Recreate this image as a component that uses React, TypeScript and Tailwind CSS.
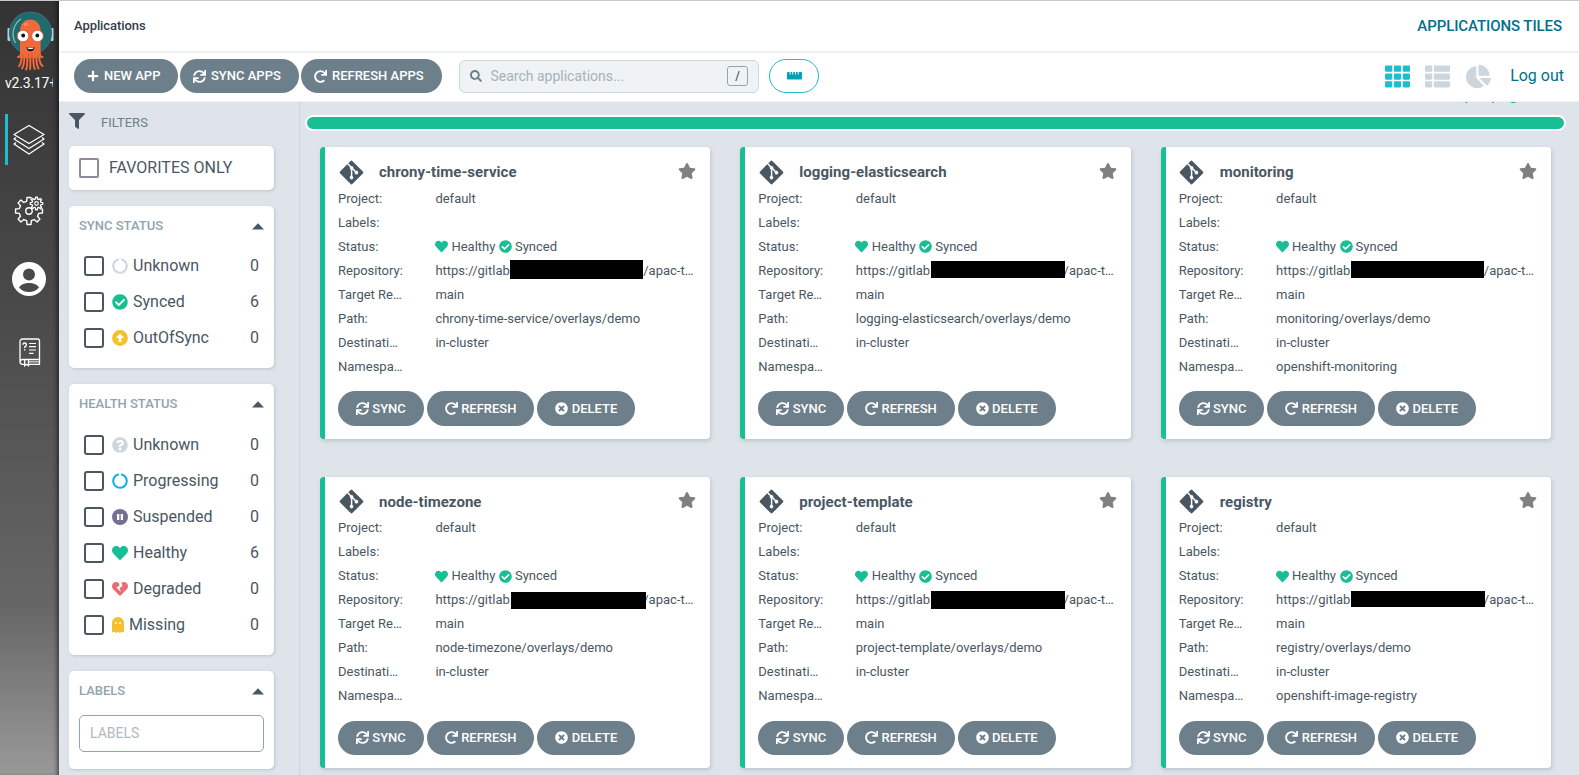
import React from "react";
import {
  FaPlus, FaSync, FaRedo, FaSearch, FaTh, FaThList, FaChartPie, FaFilter, FaStar, FaGitAlt,
  FaCircleNotch, FaCheckCircle, FaQuestionCircle, FaHeart, FaHeartBroken, FaTimesCircle,
} from "react-icons/fa";

type App = { name: string; ns: string; redact: string };

const apps: App[] = [
  { name: "chrony-time-service", ns: "", redact: "left-[74.500px] w-[133px] top-[1px] h-[19px]" },
  { name: "logging-elasticsearch", ns: "", redact: "left-[75px] w-[134px] top-[2px] h-[17px]" },
  { name: "monitoring", ns: "openshift-monitoring", redact: "left-[74.500px] w-[133px] top-[2px] h-[17px]" },
  { name: "node-timezone", ns: "", redact: "left-[75.500px] w-[135px] top-[4px] h-[17px]" },
  { name: "project-template", ns: "", redact: "left-[75px] w-[134px] top-[3px] h-[18px]" },
  { name: "registry", ns: "openshift-image-registry", redact: "left-[74.500px] w-[134px] top-[3px] h-[16px]" },
];

function Octopus() {
  return (
    <svg width="48" height="62" viewBox="0 0 48 62" className="block">
      <rect x="0.5" y="17" width="3" height="13" rx="1" fill="#b5cfe6" />
      <rect x="43.5" y="17" width="3" height="13" rx="1" fill="#b5cfe6" />
      <circle cx="23.500" cy="22" r="21.600" fill="#3d6b80" />
      <circle cx="23.500" cy="22" r="20.600" fill="#1f6a6b" />
      <path d="M8.500 32A18 18 0 0 1 14 8" fill="none" stroke="#8fb9b5" strokeWidth="1.300" />
      <path d="M13 20c0-7 4.500-11.500 10.300-11.500S33.600 13 33.600 20v27H13z" fill="#f0693c" />
      <g fill="none" stroke="#f0693c" strokeWidth="2" strokeLinecap="round">
        <path d="M14 42c0 2.500-1 4-3 4" />
        <path d="M32.600 42c0 2.500 1 4 3 4" />
        <path d="M14.500 46c0 4-.5 7-2.500 9" />
        <path d="M17.300 46c0 5-.5 9-2.300 11.500" />
        <path d="M20.300 46c0 6 .2 10-1.300 12.500" />
        <path d="M23.300 46c0 5 .2 9-.3 12" />
        <path d="M26.300 46c0 6 .2 9 1.400 12" />
        <path d="M29.300 46c0 5 .6 8.500 2.200 11.500" />
        <path d="M32.300 46c0 4 1 7 3.200 9" />
      </g>
      <path d="M15.800 44v6M21.700 43v7m3.300-7v7m6-6v6" stroke="#c94f2d" strokeWidth=".7" fill="none" />
      <ellipse cx="19" cy="13.500" rx="2.500" ry="1.800" fill="#f58a66" />
      <circle cx="16" cy="25" r="5.800" fill="#fff" stroke="#d8532d" strokeWidth=".8" />
      <circle cx="30.500" cy="25" r="5.800" fill="#fff" stroke="#d8532d" strokeWidth=".8" />
      <circle cx="16.200" cy="24.500" r="1.900" fill="#111" />
      <circle cx="30.300" cy="24.500" r="1.900" fill="#111" />
      <path d="M19.500 36c2.500 1.200 5.500 1.200 8 0-.3 3-1.800 4.300-4 4.300s-3.700-1.300-4-4.300z" fill="#111" />
      <path d="M20.500 36.400c2 .8 4 .8 6 0l-.4 1.400c-1.600.6-3.600.6-5.200 0z" fill="#fff" />
    </svg>
  );
}

function Layers() {
  return (
    <svg width="34" height="32" viewBox="0 0 34 32" fill="none" stroke="#fff" strokeWidth="1.300" strokeLinejoin="round" className="block">
      <path d="M17 1.500L32 10.500 17 19.500 2 10.500z" />
      <path d="M4 13.500L2 15 17 24.500 32 15l-2-1.500" />
      <path d="M4 18.500L2 20 17 30 32 20l-2-1.500" />
    </svg>
  );
}

function gearPath(cx: number, cy: number, outer: number, inner: number, teeth: number) {
  const step = (Math.PI * 2) / teeth;
  const points: string[] = [];
  for (let i = 0; i < teeth; i++) {
    const a = i * step - Math.PI / 2;
    [[-0.3, inner], [-0.19, outer], [0.19, outer], [0.3, inner]].forEach(([f, r]) => {
      points.push(`${(cx + Math.cos(a + f * step) * r).toFixed(2)} ${(cy + Math.sin(a + f * step) * r).toFixed(2)}`);
    });
  }
  return `M${points.join("L")}z`;
}

function Gears() {
  return (
    <svg width="30" height="30" viewBox="0 0 30 30" fill="none" stroke="#fff" strokeWidth="1.400" strokeLinejoin="round" className="block">
      <defs>
        <mask id="bigGear">
          <rect width="30" height="30" fill="#fff" />
          <circle cx="22.500" cy="7.500" r="7.800" fill="#000" />
        </mask>
      </defs>
      <g mask="url(#bigGear)">
        <path d={gearPath(15, 15, 13.6, 10, 8)} />
      </g>
      <circle cx="15" cy="15" r="3.200" />
      <path d={gearPath(22.5, 7.5, 6.3, 4.6, 8)} strokeWidth="1.300" />
      <circle cx="22.500" cy="7.500" r="1.800" strokeWidth="1.200" />
    </svg>
  );
}

function User() {
  return (
    <svg width="34" height="34" viewBox="0 0 34 34" className="block">
      <circle cx="17" cy="17" r="17" fill="#fff" />
      <circle cx="17" cy="12.500" r="6" fill="#4a4a4a" />
      <path d="M7 25.500c2.500-3.800 6-4.600 10-4.600s7.500.8 10 4.600c-2.500 3-6 4.600-10 4.600S9.500 28.500 7 25.500z" fill="#4a4a4a" />
    </svg>
  );
}

function Book() {
  return (
    <svg width="22" height="29" viewBox="0 0 22 29" fill="none" stroke="#fff" strokeWidth="1.300" className="block">
      <path d="M5.500 26.300H3.500A2.500 2.500 0 0 1 1 23.800V3.500A2.500 2.500 0 0 1 3.500 1H18.500A2 2 0 0 1 20.500 3V21.500H3.500a2.400 2.400 0 0 0 0 4.800M20.500 21.500v4.800H10" />
      <path d="M9.500 23.900H20" strokeWidth="1" />
      <path d="M5.700 22v5.700l1.900-1.400 1.900 1.400V22" />
      <path d="M4 6.700c0-2.200 3.400-2.200 3.400 0 0 1.500-1.700 1.400-1.700 3.200M5.700 11.200v1.300" strokeWidth="1.400" />
      <path d="M10 5.500h7M10 8.700h7M10 12h7M10 15.300h4.500" strokeWidth="1.200" />
    </svg>
  );
}

function Sidebar() {
  return (
    <aside className="flex w-[59px] shrink-0 flex-col items-center bg-[linear-gradient(#333_0%,#4a4a4a_40%,#666_78%,#999_100%)] pr-px shadow-[inset_-4px_0_4px_-2px_rgba(0,0,0,0.5)]">
      <div className="mt-[10px] pl-[3px]"><Octopus /></div>
      <div className="h-[20px] w-[48px] overflow-hidden whitespace-nowrap text-[14px] leading-[20px] tracking-[-0.2px] text-white">v2.3.17+</div>
      <div className="mt-[21px] flex h-[51px] w-full pl-[5px]">
        <div className="w-[3px] bg-[#1fbdd0]" />
        <div className="ml-[4px] mt-[10px]"><Layers /></div>
      </div>
      <div className="mt-[31px]"><Gears /></div>
      <div className="mt-[36px]"><User /></div>
      <div className="mt-[42px] pl-px"><Book /></div>
    </aside>
  );
}

const pill = "flex items-center rounded-full bg-[#6d7f8b] font-medium text-white whitespace-nowrap";

function Caret() {
  return <svg width="12" height="7" viewBox="0 0 12 7"><path d="M0 6.500L6 .3 12 6.500z" fill="#495763" /></svg>;
}

function Check() {
  return <span className="mr-[8px] block size-[20px] shrink-0 rounded-[3px] border-2 border-[#495763]" />;
}

function Row({ icon, label, count }: { icon: React.ReactNode; label: string; count: number }) {
  return (
    <div className="flex h-[36px] items-center text-[16px]">
      <Check />
      <span className="-mt-px">{icon}</span>
      <span className="ml-[5px] flex-1">{label}</span>
      <span>{count}</span>
    </div>
  );
}

function SuspendedIcon() {
  return (
    <svg width="16" height="16" viewBox="0 0 16 16">
      <circle cx="8" cy="8" r="8" fill="#766f94" />
      <path d="M5 5h2.300v6H5zM8.700 5H11v6H8.700z" fill="#fff" />
    </svg>
  );
}

function OutOfSyncIcon() {
  return (
    <svg width="16" height="16" viewBox="0 0 16 16">
      <circle cx="8" cy="8" r="7.900" fill="#f4c030" />
      <path d="M8 3.500L12.300 8H9.400v4H6.600V8H3.700z" fill="#fff" />
    </svg>
  );
}

function GhostIcon() {
  return (
    <svg width="12" height="16" viewBox="0 0 384 512" fill="#f4c030">
      <path d="M186 0C81 3 0 94 0 199v281c0 14 17 21 27 11l25-18c7-5 16-4 21 3l43 31c6 6 16 6 23 0l42-31c6-7 16-7 22 0l42 31c7 6 17 6 23 0l43-31c5-7 14-8 21-3l25 18c10 10 27 3 27-11V192C384 84 295-3 186 0zM128 224a32 32 0 1 1 0-64 32 32 0 0 1 0 64zm128 0a32 32 0 1 1 0-64 32 32 0 0 1 0 64z" />
    </svg>
  );
}

function Panel({ title, children, className }: { title: string; children: React.ReactNode; className: string }) {
  return (
    <section className={`rounded-[5px] bg-white pl-[10px] pr-[10px] shadow-[1px_1px_3px_rgba(109,127,139,0.3)] ${className}`}>
      <div className="flex h-[40px] items-center justify-between text-[13px] font-medium text-[#8fa4b1]">
        {title}
        <Caret />
      </div>
      {children}
    </section>
  );
}

function Filters() {
  return (
    <div className="w-[241px] shrink-0 border-r border-[#ccd6dd] pl-[10px] pr-[25px]">
      <div className="flex h-[44px] items-center text-[13px] text-[#6d7f8b]">
        <FaFilter size={16} className="-mt-[6px] text-[#495763]" />
        <span className="-mt-[3px] ml-[16px]">FILTERS</span>
      </div>
      <div className="flex h-[44px] items-center rounded-[5px] bg-white pl-[10px] text-[16px] shadow-[1px_1px_3px_rgba(109,127,139,0.3)]">
        <span className="mr-[10px] block size-[20px] rounded-[2px] border-2 border-[#8f8a9c]" />
        FAVORITES ONLY
      </div>
      <Panel title="SYNC STATUS" className="mt-[16px] h-[162px]">
        <div className="pl-[5px] pr-[5px] pt-[2px]">
          <Row icon={<FaCircleNotch size={16} color="#ccd6dd" />} label="Unknown" count={0} />
          <Row icon={<FaCheckCircle size={16} color="#18be94" />} label="Synced" count={6} />
          <Row icon={<OutOfSyncIcon />} label="OutOfSync" count={0} />
        </div>
      </Panel>
      <Panel title="HEALTH STATUS" className="mt-[16px] h-[271px]">
        <div className="pl-[5px] pr-[5px] pt-[3px]">
          <Row icon={<FaQuestionCircle size={16} color="#ccd6dd" />} label="Unknown" count={0} />
          <Row icon={<FaCircleNotch size={16} color="#0dadea" />} label="Progressing" count={0} />
          <Row icon={<SuspendedIcon />} label="Suspended" count={0} />
          <Row icon={<FaHeart size={16} color="#18be94" />} label="Healthy" count={6} />
          <Row icon={<FaHeartBroken size={16} color="#e96d76" />} label="Degraded" count={0} />
          <Row icon={<GhostIcon />} label="Missing" count={0} />
        </div>
      </Panel>
      <Panel title="LABELS" className="mt-[16px] h-[98px]">
        <div className="mt-[4px] flex h-[37px] items-center rounded-[5px] border border-[#8fa4b1] pl-[10px] text-[14px] text-[#b0b9c0]">LABELS</div>
      </Panel>
    </div>
  );
}

function Field({ label, children }: { label: string; children?: React.ReactNode }) {
  return (
    <div className="flex h-[24px] items-center leading-[24px]">
      <span className="w-[65px] shrink-0 truncate">{label}</span>
      <div className="relative ml-[32.400px] flex min-w-0 flex-1 items-center whitespace-nowrap">{children}</div>
    </div>
  );
}

function Card({ app }: { app: App }) {
  return (
    <article className="h-[291.400px] rounded-[4px] border-l-[5px] border-[#18be94] bg-white pl-[13px] pr-[14px] pt-[11.500px] text-[13px] shadow-[1px_2px_4px_rgba(109,127,139,0.3)]">
      <div className="mb-[0.800px] flex h-[27px] items-center">
        <FaGitAlt size={27} className="-ml-[0.500px] shrink-0 text-[#495763]" />
        <h2 className="ml-[14.500px] flex-1 text-[15px] font-bold tracking-[0.04px]">{app.name}</h2>
        <FaStar size={18} className="-mt-[3px] text-[#808080]" />
      </div>
      <Field label="Project:">default</Field>
      <Field label="Labels:" />
      <Field label="Status:">
        <FaHeart size={13} color="#18be94" className="-ml-[0.400px]" /><span className="ml-[3.400px]">Healthy</span>
        <FaCheckCircle size={13} color="#18be94" className="ml-[3.600px]" /><span className="ml-[3px]">Synced</span>
      </Field>
      <Field label="Repository:">
        <span>https://gitlab.</span>
        <span className="ml-[130px]">/apac-t…</span>
        <span className={`absolute bg-black ${app.redact}`} />
      </Field>
      <Field label="Target Revision:">main</Field>
      <Field label="Path:">{app.name}/overlays/demo</Field>
      <Field label="Destination:">in-cluster</Field>
      <Field label="Namespace:">{app.ns}</Field>
      <div className="mt-[12.600px] flex gap-[3px]">
        <button className={`${pill} h-[34.400px] gap-[3.300px] px-[18px]`}><FaSync size={13} />SYNC</button>
        <button className={`${pill} h-[34.400px] gap-[3.300px] px-[18px]`}><FaRedo size={13} />REFRESH</button>
        <button className={`${pill} h-[34.400px] gap-[3.300px] px-[18px]`}><FaTimesCircle size={13} />DELETE</button>
      </div>
    </article>
  );
}

export default function App() {
  return (
    <div className="flex h-[775px] w-[1579px] overflow-hidden border-t border-[#c8c8c8] bg-[#dee4ea] font-[Roboto,sans-serif] text-[#495763]">
      <Sidebar />
      <div className="flex min-w-0 flex-1 flex-col">
        <header className="flex h-[52px] shrink-0 items-center justify-between border-b-2 border-[#edf1f5] bg-white pl-[15px] pr-[17px]">
          <span className="text-[13px] font-medium tracking-[-0.08px] text-[#363c4a]">Applications</span>
          <span className="text-[15px] font-medium tracking-[-0.08px] text-[#006f8a]">APPLICATIONS TILES</span>
        </header>
        <div className="flex h-[48px] shrink-0 items-center bg-white pb-[2px] pl-[15px] pr-[15px] text-[13px]">
          <button className={`${pill} h-[34px] w-[104px] gap-[5px] pl-[13px]`}><FaPlus size={12} />NEW APP</button>
          <button className={`${pill} ml-[2px] h-[34px] w-[119px] gap-[5px] pl-[13px]`}><FaSync size={13} />SYNC APPS</button>
          <button className={`${pill} ml-[2px] h-[34px] w-[141px] gap-[5px] pl-[13px]`}><FaRedo size={13} />REFRESH APPS</button>
          <div className="ml-[17px] flex h-[33px] w-[300px] items-center rounded-[6px] border border-[#ccd6dd] bg-[#eff3f5] pl-[10px] pr-[10px] text-[14px] text-[#a6b1b9]">
            <FaSearch size={12} className="mr-[8.500px] text-[#6d7f8b]" />
            <span className="flex-1">Search applications...</span>
            <span className="flex h-[20px] w-[21px] items-center justify-center rounded-[3px] border border-[#8fa4b1] text-[12px] font-medium text-[#495763]">/</span>
          </div>
          <button className="ml-[10px] flex h-[34px] w-[50px] items-center justify-center rounded-full border border-[#1fbdd0] text-[#00a2b3]">
            <svg width="15" height="8" viewBox="0 0 15 8">
              <path d="M1 0h1.600v2.500h1V0h1.700v2.500h1V0H8v2.500h1V0h1.700v2.500h1V0H14a1 1 0 0 1 1 1v5.500a1 1 0 0 1-1 1H1a1 1 0 0 1-1-1V1a1 1 0 0 1 1-1z" fill="#00a2b3" />
            </svg>
          </button>
          <div className="flex-1" />
          <FaTh size={25} className="text-[#1fbdd0]" />
          <FaThList size={25} className="ml-[15px] text-[#ccd6dd]" />
          <FaChartPie size={25} className="ml-[15.500px] text-[#ccd6dd]" />
          <span className="ml-[19.500px] text-[16px] text-[#006f8a]">Log out</span>
        </div>
        <div className="flex min-h-0 flex-1 border-t border-[#edf1f5]">
          <Filters />
          <main className="min-w-0 flex-1 pl-[5px] pr-[13px]">
            <div className="flex h-[13px] items-start justify-end overflow-hidden">
              <span className="-mt-[16px] mr-[14px] text-[16px] leading-[18px] text-[#00a2b3]">Items per page: 10</span>
            </div>
            <div className="h-[16px] rounded-full border-2 border-white bg-[#18be94]" />
            <div className="mt-[16.400px] grid grid-cols-3 gap-x-[30px] gap-y-[38.100px] pl-[15px] pr-[15px]">
              {apps.map((app) => <Card key={app.name} app={app} />)}
            </div>
          </main>
        </div>
      </div>
    </div>
  );
}
